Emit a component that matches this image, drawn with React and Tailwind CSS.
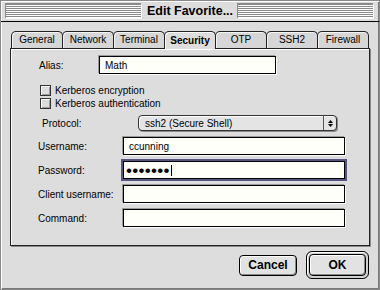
import React from "react";

const tabs = ["General", "Network", "Terminal", "Security", "OTP", "SSH2", "Firewall"];

const Stripes = () => (
  <div className="flex-1 h-[15px] bg-[repeating-linear-gradient(to_bottom,#8a8a8a_0px,#8a8a8a_1px,#ffffff_1px,#ffffff_2px)] border-r border-b border-[#ffffff] shadow-[-1px_-1px_0_#8a8a8a]" />
);

const Field = ({ children, focused, className = "" }) => (
  <div
    className={
      "h-[18px] bg-[#fffffa] border border-black flex items-center px-[5px] text-[10px] " +
      (focused
        ? "shadow-[0_0_0_2px_#55557f] "
        : "shadow-[-1px_-1px_0_#9a9a9a,1px_1px_0_#ffffff] ") +
      className
    }
  >
    {children}
  </div>
);

const Checkbox = ({ label }) => (
  <div className="flex items-center h-[13px]">
    <div className="w-[11px] h-[11px] border border-[#333] bg-[#dcdcdc] shadow-[inset_1px_1px_0_#ffffff,inset_-1px_-1px_0_#9a9a9a]" />
    <span className="ml-[4px]">{label}</span>
  </div>
);

export default function App() {
  return (
    <div className="w-[380px] h-[290px] bg-[#dddddd] text-black font-['Liberation_Sans',Arial,sans-serif] text-[10px] flex flex-col border border-[#8a8a8a] shadow-[inset_1px_1px_0_#ffffff,inset_-1px_-1px_0_#777]">
      {/* title bar */}
      <div className="h-[21px] shrink-0 flex items-center px-[5px] border-b border-black">
        <Stripes />
        <div className="px-[5px] text-[12.5px] font-bold leading-none">Edit Favorite...</div>
        <Stripes />
      </div>

      <div className="flex-1 flex flex-col px-[9px] pt-[9px]">
        {/* tabs */}
        <div className="flex h-[17px] pl-[1px] relative z-10">
          {tabs.map((t) => {
            const sel = t === "Security";
            return (
              <div
                key={t}
                className={
                  "w-[52px] -ml-px first:ml-0 rounded-t-[5px] border border-b-0 border-[#222] flex items-center justify-center leading-none " +
                  (sel
                    ? "bg-[#dddddd] font-bold h-[18px] shadow-[inset_1px_1px_0_#ffffff]"
                    : "bg-[#d6d6d6] h-[17px] shadow-[inset_1px_1px_0_#f4f4f4]")
                }
              >
                {t}
              </div>
            );
          })}
        </div>

        {/* panel */}
        <div className="h-[198px] w-[360px] border border-[#222] bg-[#dddddd] shadow-[inset_1px_1px_0_#ffffff,1px_1px_0_#8a8a8a] flex flex-col">
          <div className="flex items-center mt-[7px] pl-[28px]">
            <span className="w-[60px]">Alias:</span>
            <Field className="w-[177px]">Math</Field>
          </div>

          <div className="flex flex-col mt-[10px] pl-[29px]">
            <Checkbox label="Kerberos encryption" />
            <Checkbox label="Kerberos authentication" />
          </div>

          <div className="flex items-center mt-[5px] pl-[31px]">
            <span className="w-[96px]">Protocol:</span>
            <div className="w-[199px] h-[16px] rounded-[4px] border border-[#333] bg-[#e4e4e4] shadow-[inset_1px_1px_0_#ffffff,1px_1px_0_#8a8a8a] flex items-center">
              <span className="flex-1 pl-[6px]">ssh2 (Secure Shell)</span>
              <div className="w-[13px] h-full border-l border-[#555] flex flex-col items-center justify-center gap-[1px]">
                <svg width="5" height="3" viewBox="0 0 5 3"><path d="M2.5 0 L5 3 L0 3 Z" fill="#000" /></svg>
                <svg width="5" height="3" viewBox="0 0 5 3"><path d="M0 0 L5 0 L2.5 3 Z" fill="#000" /></svg>
              </div>
            </div>
          </div>

          <div className="flex flex-col gap-[6px] mt-[6px] pl-[27px]">
            <div className="flex items-center">
              <span className="w-[85px]">Username:</span>
              <Field className="w-[222px]">ccunning</Field>
            </div>
            <div className="flex items-center">
              <span className="w-[85px]">Password:</span>
              <Field focused className="w-[222px] pl-[2px]">
                <span className="text-[17px] leading-none tracking-[0.3px]">•••••••</span>
                <span className="ml-[1px] w-px h-[11px] bg-black" />
              </Field>
            </div>
            <div className="flex items-center">
              <span className="w-[85px]">Client username:</span>
              <Field className="w-[222px]" />
            </div>
            <div className="flex items-center">
              <span className="w-[85px]">Command:</span>
              <Field className="w-[222px]" />
            </div>
          </div>
        </div>

        {/* buttons */}
        <div className="flex justify-end items-center gap-[9px] mt-[5px] pr-[1px]">
          <button className="w-[58px] h-[21px] rounded-[4px] border border-black bg-[#e2e2e2] shadow-[inset_1px_1px_0_#ffffff,inset_-1px_-1px_0_#8a8a8a] text-[12px] font-bold leading-none">
            Cancel
          </button>
          <div className="w-[63px] h-[28px] rounded-[6px] border border-black bg-[#cfcfcf] p-[2px] shadow-[inset_1px_1px_0_#ffffff]">
            <button className="w-full h-full rounded-[4px] border border-black bg-[#e2e2e2] shadow-[inset_1px_1px_0_#ffffff,inset_-1px_-1px_0_#8a8a8a] text-[12px] font-bold leading-none">
              OK
            </button>
          </div>
        </div>
      </div>
    </div>
  );
}
